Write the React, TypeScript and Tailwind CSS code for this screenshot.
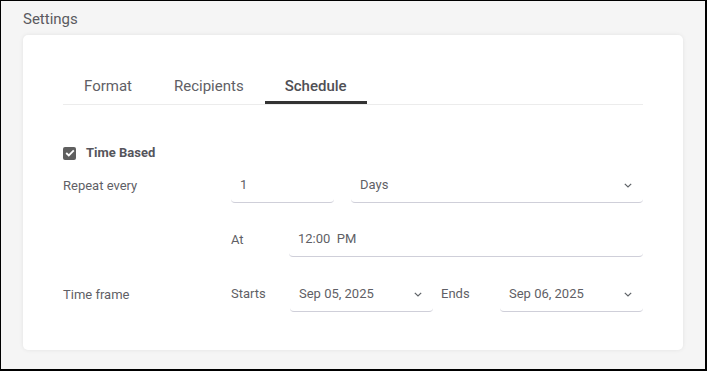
import React from "react";

const font = { fontFamily: "Roboto, 'Noto Sans', Arial, sans-serif" };

const Chevron: React.FC = () => (
  <svg width="8" height="5" viewBox="0 0 8 5" className="mr-[2px] text-[#5f6368]">
    <polyline points="0.8,0.8 4,4 7.2,0.8" fill="none" stroke="currentColor" strokeWidth="1.2" />
  </svg>
);

const Field: React.FC<{ value: string; select?: boolean; className?: string }> = ({
  value,
  select,
  className = "",
}) => (
  <div
    className={`flex h-[32px] items-center justify-between rounded-b-[4px] border-b border-[#cfcfd9] pb-[3px] pl-[9px] pr-[9px] text-[13px] text-[#5f5f66] ${className}`}
  >
    <span className="whitespace-pre">{value}</span>
    {select && <Chevron />}
  </div>
);

const tabs = ["Format", "Recipients", "Schedule"];

export default function App() {
  return (
    <div
      style={font}
      className="h-[371px] w-[707px] overflow-hidden border-b-2 border-l border-r-2 border-t border-black bg-[#f5f5f5]"
    >
      <div className="px-[22px] pt-[8px]">
        <h2 className="text-[15px] leading-[20px] text-[#5a5a60]">Settings</h2>
        <div className="mt-[6px] h-[315px] rounded-[5px] bg-white pl-[40px] pr-[40px] pt-[31px] shadow-[0_0_4px_rgba(0,0,0,0.08)]">
          <div className="flex h-[39px] border-b border-[#ececec]">
            {tabs.map((t) => {
              const active = t === "Schedule";
              return (
                <div
                  key={t}
                  className={`relative flex h-[38px] items-center pt-[2px] text-[15px] ${
                    active ? "px-[20px] font-medium text-[#4f4f55]" : "px-[21px] text-[#5f5f66]"
                  }`}
                >
                  {t}
                  {active && <div className="absolute bottom-0 left-0 right-0 h-[3px] bg-[#333333]" />}
                </div>
              );
            })}
          </div>

          <div className="mt-[38px] flex h-[20px] items-center gap-[10px]">
            <div className="flex h-[13px] w-[13px] items-center justify-center rounded-[2px] bg-[#5f5f5f]">
              <svg width="10" height="8" viewBox="0 0 10 8">
                <polyline points="1.2,4 3.8,6.5 8.8,1.4" fill="none" stroke="white" strokeWidth="1.8" />
              </svg>
            </div>
            <span className="text-[13px] font-bold text-[#55555c]">Time Based</span>
          </div>

          <div className="mt-[8px] grid grid-cols-[168px_1fr] text-[13px] text-[#5f5f66]">
            <div className="flex h-[32px] items-center pb-[3px]">Repeat every</div>
            <div className="flex gap-[17px]">
              <Field value="1" className="w-[103px]" />
              <Field value="Days" select className="flex-1" />
            </div>

            <div className="mt-[22px]" />
            <div className="mt-[22px] flex">
              <div className="flex h-[32px] w-[58px] items-center pb-[3px]">At</div>
              <Field value="12:00  PM" className="flex-1" />
            </div>

            <div className="mt-[23px] flex h-[32px] items-center pb-[3px]">Time frame</div>
            <div className="mt-[23px] flex">
              <div className="flex h-[32px] w-[59px] items-center pb-[4px]">Starts</div>
              <Field value="Sep 05, 2025" select className="w-[143px]" />
              <div className="ml-[8px] flex h-[32px] w-[59px] items-center pb-[4px]">Ends</div>
              <Field value="Sep 06, 2025" select className="flex-1" />
            </div>
          </div>
        </div>
      </div>
    </div>
  );
}
